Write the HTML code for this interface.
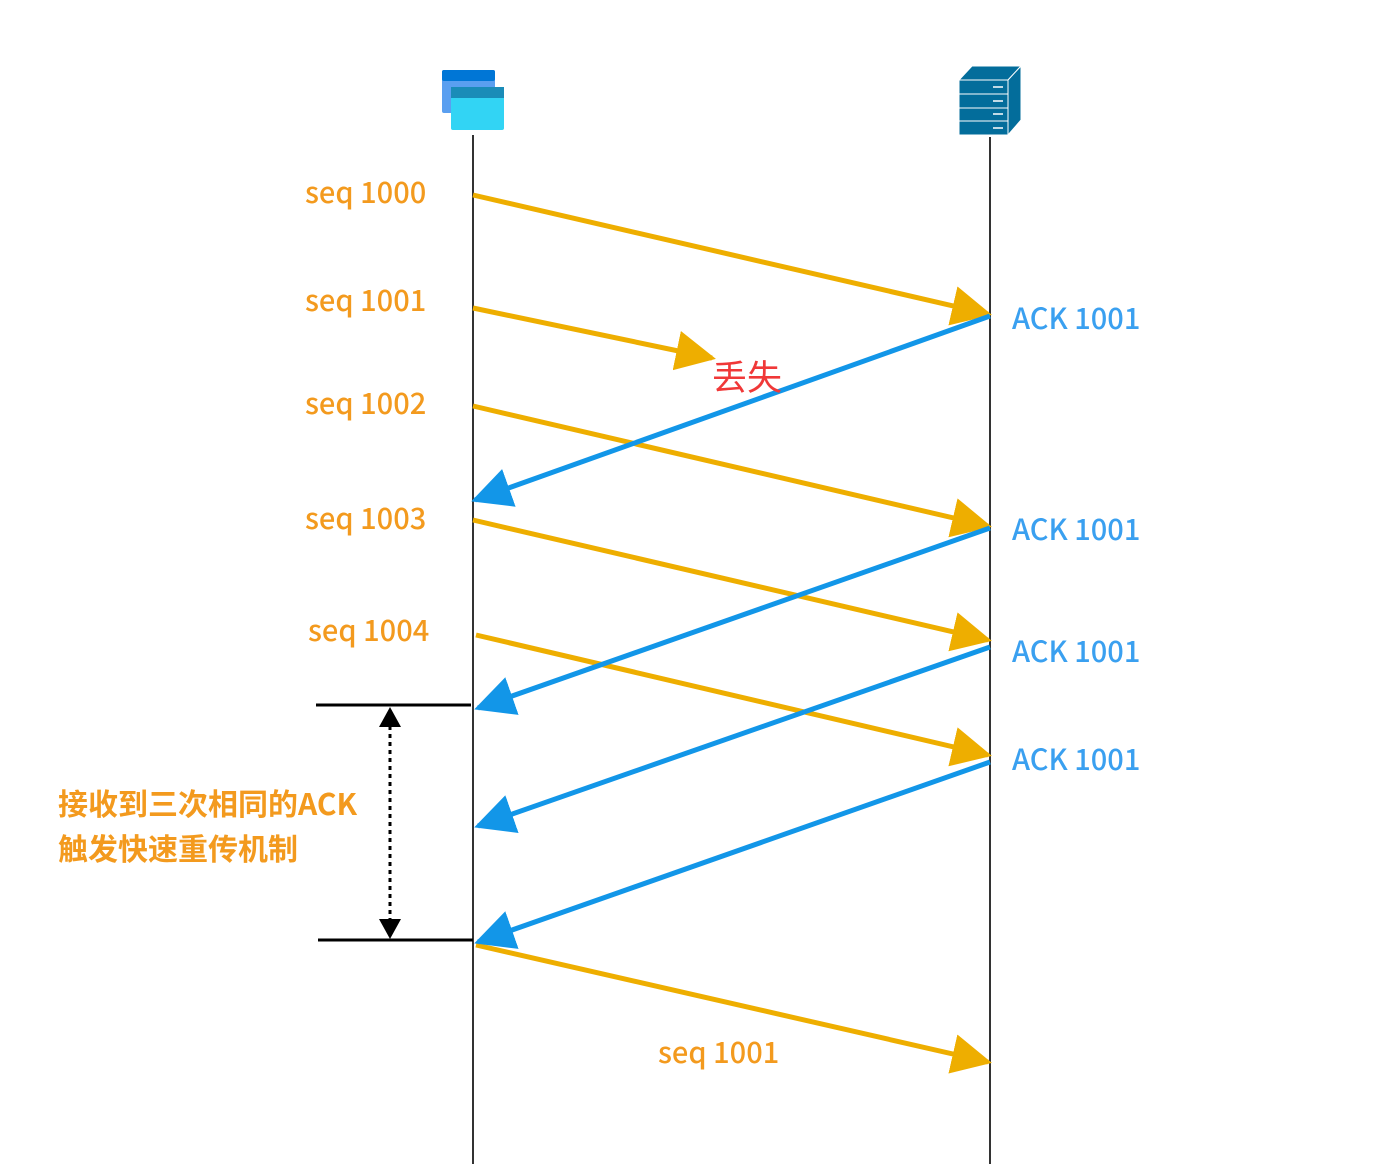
<!DOCTYPE html>
<html><head><meta charset="utf-8"><style>
html,body{margin:0;padding:0;background:#fff;width:1380px;height:1164px;overflow:hidden}
</style></head><body>
<svg width="1380" height="1164" xmlns="http://www.w3.org/2000/svg" style="font-family:'Noto Sans CJK SC',sans-serif">
<defs>
<marker id="o" markerWidth="8" markerHeight="8" refX="9" refY="5" orient="auto" viewBox="0 0 10 10"><path d="M0,0 L10,5 L0,10 z" fill="#eeae00"/></marker>
<marker id="b" markerWidth="8" markerHeight="8" refX="9" refY="5" orient="auto" viewBox="0 0 10 10"><path d="M0,0 L10,5 L0,10 z" fill="#1296e8"/></marker>
</defs>
<rect x="442" y="70" width="53" height="43" rx="2" fill="#5a9ff0"/>
<rect x="442" y="70" width="53" height="11" rx="2" fill="#0076d6"/>
<rect x="451" y="87" width="53" height="43" rx="2" fill="#32d4f4"/>
<rect x="451" y="87" width="53" height="11" fill="#1a8cb8"/>
<polygon points="959,80 972,66 1021,66 1008,80" fill="#036d9b" stroke="#fff" stroke-width="1"/>
<polygon points="1008,80 1021,66 1021,120 1008,135" fill="#036d9b" stroke="#fff" stroke-width="1"/>
<rect x="959" y="80" width="49" height="55" fill="#036d9b" stroke="#fff" stroke-width="1"/>
<g stroke="#fff" stroke-width="1"><line x1="959" y1="94" x2="1008" y2="94"/><line x1="959" y1="108" x2="1008" y2="108"/><line x1="959" y1="121" x2="1008" y2="121"/></g>
<g stroke="#fff" stroke-width="1.5"><line x1="993" y1="87" x2="1003" y2="87"/><line x1="993" y1="101" x2="1003" y2="101"/><line x1="993" y1="114" x2="1003" y2="114"/><line x1="993" y1="128" x2="1003" y2="128"/></g>
<line x1="473" y1="135" x2="473" y2="1164" stroke="#333" stroke-width="2"/>
<line x1="990" y1="137" x2="990" y2="1164" stroke="#333" stroke-width="2"/>
<g stroke="#eeae00" stroke-width="5" fill="none">
<line x1="473" y1="195" x2="988" y2="314" marker-end="url(#o)"/>
<line x1="473" y1="308" x2="712" y2="358" marker-end="url(#o)"/>
<line x1="473" y1="406" x2="988" y2="526" marker-end="url(#o)"/>
<line x1="473" y1="520" x2="988" y2="640" marker-end="url(#o)"/>
<line x1="476" y1="635" x2="988" y2="755" marker-end="url(#o)"/>
<line x1="476" y1="945" x2="988" y2="1062" marker-end="url(#o)"/>
</g>
<g stroke="#1296e8" stroke-width="5" fill="none">
<line x1="990" y1="316" x2="475" y2="500" marker-end="url(#b)"/>
<line x1="990" y1="528" x2="478" y2="708" marker-end="url(#b)"/>
<line x1="990" y1="647" x2="478" y2="826" marker-end="url(#b)"/>
<line x1="990" y1="762" x2="478" y2="942" marker-end="url(#b)"/>
</g>
<g stroke="#000" stroke-width="3"><line x1="316" y1="705" x2="471" y2="705"/><line x1="318" y1="940" x2="473" y2="940"/></g>
<line x1="390" y1="726" x2="390" y2="920" stroke="#000" stroke-width="3" stroke-dasharray="4,4"/>
<polygon points="390,707 379,727 401,727" fill="#000"/>
<polygon points="390,939 379,919 401,919" fill="#000"/>
<g fill="#f39a1e" font-size="29" font-weight="500">
<text x="305" y="203">seq 1000</text>
<text x="305" y="311">seq 1001</text>
<text x="305" y="414">seq 1002</text>
<text x="305" y="529">seq 1003</text>
<text x="308" y="641">seq 1004</text>
<text x="658" y="1063">seq 1001</text>
</g>
<g fill="#3aa0f0" font-size="29" font-weight="500">
<text x="1012" y="329">ACK 1001</text>
<text x="1012" y="540">ACK 1001</text>
<text x="1012" y="662">ACK 1001</text>
<text x="1012" y="770">ACK 1001</text>
</g>
<text x="712" y="390" fill="#f03838" font-size="35">丢失</text>
<g fill="#f39a1e" font-size="30" font-weight="bold">
<text x="58" y="815">接收到三次相同的ACK</text>
<text x="58" y="860">触发快速重传机制</text>
</g>
</svg>
</body></html>
